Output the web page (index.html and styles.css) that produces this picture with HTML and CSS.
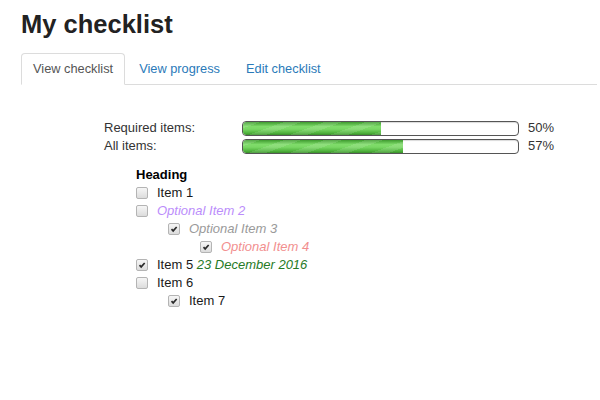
FILE: index.html
```
<!DOCTYPE html>
<html>
<head>
<meta charset="utf-8">
<link rel="stylesheet" href="styles.css">
</head>
<body>
<div class="page">
  <h1 class="title">My checklist</h1>
  <ul class="tabs">
    <li class="tab active"><span>View checklist</span></li>
    <li class="tab"><a href="#">View progress</a></li>
    <li class="tab"><a href="#">Edit checklist</a></li>
  </ul>
  <div class="progress">
    <div class="plabel">Required items:</div>
    <div class="bar"><div class="fill" style="width:50%"></div></div>
    <div class="pct">50%</div>
    <div class="plabel">All items:</div>
    <div class="bar"><div class="fill" style="width:58%"></div></div>
    <div class="pct">57%</div>
  </div>
  <div class="list">
    <div class="heading">Heading</div>
    <div class="item"><span class="cb"></span><span class="txt">Item 1</span></div>
    <div class="item"><span class="cb"></span><span class="txt opt2">Optional Item 2</span></div>
    <div class="item lvl1"><span class="cb on"><svg viewBox="0 0 12 12"><path d="M3 6.2 L5 8.3 L9.2 3.6"/></svg></span><span class="txt opt3">Optional Item 3</span></div>
    <div class="item lvl2"><span class="cb on"><svg viewBox="0 0 12 12"><path d="M3 6.2 L5 8.3 L9.2 3.6"/></svg></span><span class="txt opt4">Optional Item 4</span></div>
    <div class="item"><span class="cb on"><svg viewBox="0 0 12 12"><path d="M3 6.2 L5 8.3 L9.2 3.6"/></svg></span><span class="txt">Item 5 <em class="date">23 December 2016</em></span></div>
    <div class="item"><span class="cb"></span><span class="txt">Item 6</span></div>
    <div class="item lvl1"><span class="cb on"><svg viewBox="0 0 12 12"><path d="M3 6.2 L5 8.3 L9.2 3.6"/></svg></span><span class="txt">Item 7</span></div>
  </div>
</div>
</body>
</html>
```
FILE: styles.css
```
html, body {
  margin: 0;
  padding: 0;
  background: #fff;
}
body {
  font-family: "Liberation Sans", Arial, sans-serif;
  font-size: 13px;
  color: #333;
}
.page {
  padding: 0 3px 0 21px;
}
.title {
  margin: 9px 0 0;
  font-size: 25.5px;
  line-height: 30px;
  font-weight: bold;
  color: #222;
}
.tabs {
  list-style: none;
  margin: 14px 0 0;
  padding: 0;
  display: flex;
  border-bottom: 1px solid #dcdcdc;
}
.tab {
  margin-right: 2px;
  margin-bottom: -1px;
}
.tab span, .tab a {
  display: block;
  padding: 7px 11px;
  line-height: 16px;
  font-size: 12.8px;
  border: 1px solid transparent;
  border-radius: 4px 4px 0 0;
  text-decoration: none;
  color: #2a7ab9;
}
.tab.active span {
  color: #555;
  background: #fff;
  border-color: #dcdcdc #dcdcdc transparent;
}
.progress {
  margin: 34px 0 0 83px;
  display: grid;
  grid-template-columns: 138px 277px auto;
  grid-auto-rows: 18px;
  align-items: center;
}
.plabel {
  line-height: 18px;
}
.pct {
  padding-left: 9px;
  line-height: 18px;
}
.bar {
  height: 13px;
  border: 1px solid #555;
  border-radius: 4px;
  background: #fff;
  overflow: hidden;
  box-shadow: inset 0 1px 1px rgba(0,0,0,0.15);
}
.fill {
  height: 100%;
  border-radius: 3px 0 0 3px;
  background:
    repeating-linear-gradient(160deg, rgba(255,255,255,0.12) 0 6px, rgba(255,255,255,0) 6px 14px),
    linear-gradient(to bottom, #3f9b30 0%, #7fdc6a 35%, #79d764 55%, #4fb23c 85%, #3a8f2b 100%);
}
.list {
  margin: 11px 0 0 115px;
}
.heading {
  font-weight: bold;
  color: #000;
  line-height: 18px;
}
.item {
  display: flex;
  align-items: center;
  height: 18px;
}
.item.lvl1 {
  padding-left: 32px;
}
.item.lvl2 {
  padding-left: 64px;
}
.cb {
  width: 10px;
  height: 10px;
  border: 1px solid #b4b4b4;
  border-radius: 2px;
  background: linear-gradient(to bottom, #f6f6f6, #dcdcdc);
  margin-right: 9px;
  flex: none;
  display: flex;
  align-items: center;
  justify-content: center;
}
.cb svg {
  width: 10px;
  height: 10px;
}
.cb svg path {
  fill: none;
  stroke: #2a2a2a;
  stroke-width: 2;
}
.txt {
  color: #1a1a1a;
  line-height: 18px;
  white-space: nowrap;
}
.opt2 {
  color: #bb8dfb;
  font-style: italic;
}
.opt3 {
  color: #9a9a9a;
  font-style: italic;
}
.opt4 {
  color: #f28f8f;
  font-style: italic;
}
.date {
  color: #267a26;
}
```
